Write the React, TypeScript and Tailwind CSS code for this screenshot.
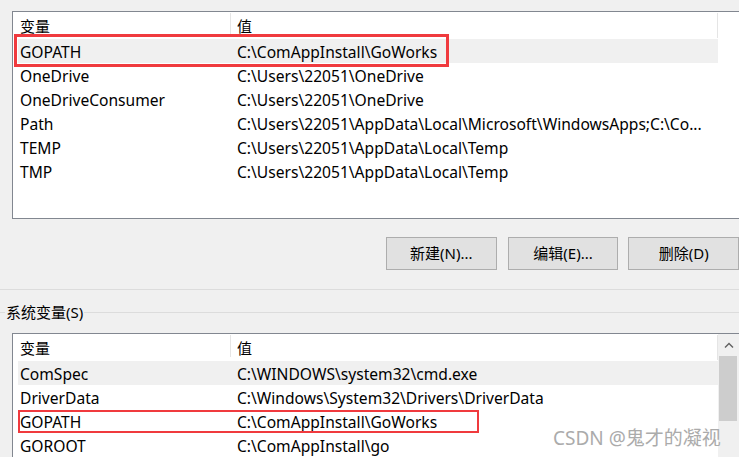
const userVars = [
  ["GOPATH", "C:\\ComAppInstall\\GoWorks"],
  ["OneDrive", "C:\\Users\\22051\\OneDrive"],
  ["OneDriveConsumer", "C:\\Users\\22051\\OneDrive"],
  ["Path", "C:\\Users\\22051\\AppData\\Local\\Microsoft\\WindowsApps;C:\\Co..."],
  ["TEMP", "C:\\Users\\22051\\AppData\\Local\\Temp"],
  ["TMP", "C:\\Users\\22051\\AppData\\Local\\Temp"],
];

const sysVars = [
  ["ComSpec", "C:\\WINDOWS\\system32\\cmd.exe"],
  ["DriverData", "C:\\Windows\\System32\\Drivers\\DriverData"],
  ["GOPATH", "C:\\ComAppInstall\\GoWorks"],
  ["GOROOT", "C:\\ComAppInstall\\go"],
];

function Header() {
  return (
    <div className="flex h-[27px]">
      <div className="w-[212px] pl-[2px] pt-[2px] leading-[24px]">变量</div>
      <div className="mt-[1px] h-[22px] w-px bg-[#e5e5e5]" />
      <div className="w-[486px] pl-[6px] pt-[2px] leading-[24px]">值</div>
      <div className="mt-[1px] h-[25px] w-px bg-[#e5e5e5]" />
    </div>
  );
}

function Rows({ rows }: { rows: string[][] }) {
  return (
    <div className="flex flex-col text-[15.6px]">
      {rows.map(([name, value], i) => (
        <div
          key={name + i}
          className={`flex h-[24px] w-[700px] items-center whitespace-nowrap pt-[3px] ${i === 0 ? "bg-[#f0f0f0]" : ""}`}
        >
          <div className="w-[212px] pl-[2px]">{name}</div>
          <div className="w-[488px] overflow-hidden pl-[7px]">{value}</div>
        </div>
      ))}
    </div>
  );
}

export default function App() {
  return (
    <div className="relative h-[457px] w-[739px] overflow-hidden bg-[#f0f0f0] font-['Noto_Sans','Noto_Sans_CJK_SC',sans-serif] text-[15px] text-black">
      {/* 用户变量 */}
      <div className="pt-[11px] pl-[12px]">
        <div className="relative h-[208px] w-[740px] border border-[#828790] bg-white pl-[5px]">
          <Header />
          <Rows rows={userVars} />
          <div className="absolute left-[1px] top-[22px] h-[33px] w-[435px] border-[3px] border-[#f03a3e]" />
        </div>
      </div>

      <div className="mt-[18px] flex pl-[386px]">
        <button className="h-[33px] w-[111px] border border-[#adadad] bg-[#e1e1e1]">新建(N)...</button>
        <button className="ml-[11px] h-[33px] w-[111px] border border-[#adadad] bg-[#e1e1e1]">编辑(E)...</button>
        <button className="ml-[10px] h-[33px] w-[111px] border border-[#adadad] bg-[#e1e1e1]">删除(D)</button>
      </div>

      <div className="mt-[19px] h-px bg-[#dcdcdc]" />

      <div className="mt-[12px] flex h-[20px] items-center">
        <div className="h-px w-[5px] bg-[#dcdcdc]" />
        <span className="px-px leading-[20px]">系统变量(S)</span>
        <div className="h-px flex-1 bg-[#dcdcdc]" />
      </div>

      {/* 系统变量 */}
      <div className="mt-[11px] pl-[12px]">
        <div className="flex h-[200px] w-[740px] border border-[#828790] bg-white">
          <div className="relative w-[705px] pl-[5px]">
            <Header />
            <Rows rows={sysVars} />
            <div className="absolute left-[5px] top-[76px] h-[23px] w-[461px] border-2 border-[#f03a3e]" />
          </div>
          <div className="flex w-[21px] flex-col bg-[#f0f0f0]">
            <div className="flex h-[22px] items-center justify-center">
              <svg width="10" height="6" viewBox="0 0 10 6">
                <path d="M1 5.5 L5 1.5 L9 5.5" fill="none" stroke="#606060" strokeWidth="1.4" />
              </svg>
            </div>
            <div className="ml-[1px] h-[65px] w-[18px] bg-[#cdcdcd]" />
          </div>
        </div>
      </div>

      <div className="absolute left-[553px] top-[426px] whitespace-nowrap text-[19px] leading-[24px] text-[#ababab]">
        CSDN @鬼才的凝视
      </div>
    </div>
  );
}
